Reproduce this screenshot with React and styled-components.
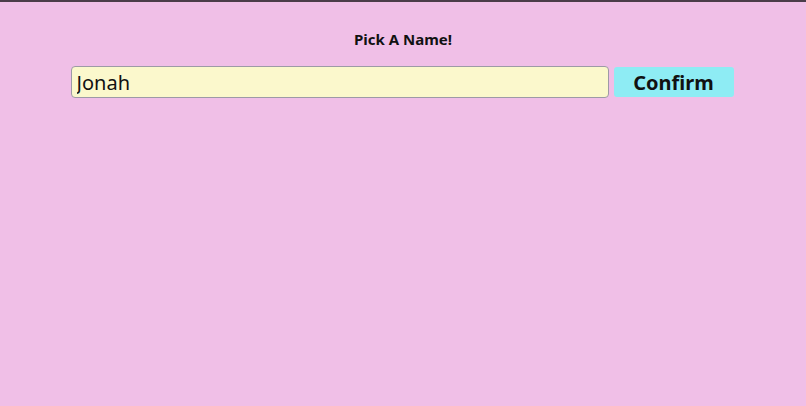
import React, { useState } from "react";
import styled, { createGlobalStyle } from "styled-components";

const GlobalStyle = createGlobalStyle`
  html, body {
    margin: 0;
    padding: 0;
    height: 100%;
  }
  body {
    background: #f0bfe7;
    border-top: 2px solid #4b3c49;
    box-sizing: border-box;
    font-family: "Noto Sans", "Open Sans", sans-serif;
  }
`;

const Page = styled.div`
  display: flex;
  flex-direction: column;
  align-items: center;
  padding-top: 26px;
`;

const Title = styled.h1`
  margin: 0;
  font-size: 15px;
  font-weight: 700;
  line-height: 22px;
  color: #111;
`;

const Row = styled.form`
  display: flex;
  align-items: center;
  gap: 5px;
  margin-top: 16px;
  margin-right: 2px;
`;

const NameInput = styled.input`
  box-sizing: border-box;
  width: 538px;
  height: 32px;
  padding: 0 5px;
  border: 1px solid #9d9aa6;
  border-radius: 4px;
  background: #fbf8cc;
  font-family: "Noto Sans", "Open Sans", sans-serif;
  font-size: 20px;
  color: #111;
  outline: none;
`;

const ConfirmButton = styled.button`
  width: 120px;
  height: 30px;
  padding: 0;
  border: none;
  border-radius: 3px;
  background: #8eecf4;
  font-family: "Noto Sans", "Open Sans", sans-serif;
  font-size: 20px;
  font-weight: 700;
  color: #111;
  cursor: pointer;
`;

export default function App() {
  const [name, setName] = useState("Jonah");

  return (
    <>
      <GlobalStyle />
      <Page>
        <Title>Pick A Name!</Title>
        <Row onSubmit={(e) => e.preventDefault()}>
          <NameInput value={name} onChange={(e) => setName(e.target.value)} />
          <ConfirmButton type="submit">Confirm</ConfirmButton>
        </Row>
      </Page>
    </>
  );
}
